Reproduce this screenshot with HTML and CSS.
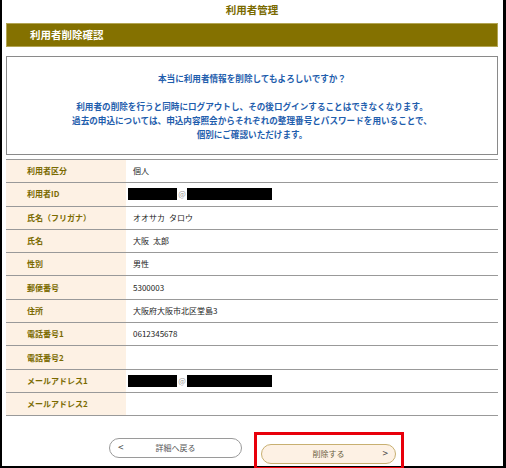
FILE: index.html
```html
<!DOCTYPE html>
<html lang="ja">
<head>
<meta charset="utf-8">
<link rel="stylesheet" href="styles.css">
</head>
<body>
<div class="frame">
  <h1 class="page-title">利用者管理</h1>
  <div class="section-bar">利用者削除確認</div>
  <div class="notice">
    <p>本当に利用者情報を削除してもよろしいですか？</p>
    <p>利用者の削除を行うと同時にログアウトし、その後ログインすることはできなくなります。<br>過去の申込については、申込内容照会からそれぞれの整理番号とパスワードを用いることで、<br>個別にご確認いただけます。</p>
  </div>
  <div class="info">
    <div class="row"><div class="label">利用者区分</div><div class="value">個人</div></div>
    <div class="row"><div class="label">利用者ID</div><div class="value"><span class="redact r1"></span><span class="at">@</span><span class="redact r2"></span></div></div>
    <div class="row"><div class="label">氏名（フリガナ）</div><div class="value">オオサカ&#8194;タロウ</div></div>
    <div class="row"><div class="label">氏名</div><div class="value">大阪&#8194;太郎</div></div>
    <div class="row"><div class="label">性別</div><div class="value">男性</div></div>
    <div class="row"><div class="label">郵便番号</div><div class="value">5300003</div></div>
    <div class="row"><div class="label">住所</div><div class="value">大阪府大阪市北区堂島3</div></div>
    <div class="row"><div class="label">電話番号1</div><div class="value">0612345678</div></div>
    <div class="row"><div class="label">電話番号2</div><div class="value"></div></div>
    <div class="row"><div class="label">メールアドレス1</div><div class="value"><span class="redact r1"></span><span class="at">@</span><span class="redact r2"></span></div></div>
    <div class="row"><div class="label">メールアドレス2</div><div class="value"></div></div>
  </div>
  <div class="actions">
    <button class="btn btn-back"><span class="arrow left">&lt;</span>詳細へ戻る</button>
    <div class="highlight">
      <button class="btn btn-delete">削除する<span class="arrow right">&gt;</span></button>
    </div>
  </div>
</div>
</body>
</html>
```
FILE: styles.css
```css
* { box-sizing: border-box; }
html, body { margin: 0; padding: 0; background: #fff; }
body {
  font-family: "Noto Sans CJK JP", "Noto Sans", sans-serif;
  width: 506px;
  height: 468px;
  overflow: hidden;
}
.frame {
  width: 506px;
  height: 468px;
  border-left: 2px solid #000;
  border-right: 3px solid #000;
  border-bottom: 2px solid #000;
  padding: 0 5px 0 4px;
}
.page-title {
  margin: 0;
  height: 23px;
  padding-top: 2px;
  font-size: 10.5px;
  line-height: 16px;
  font-weight: bold;
  text-align: center;
  color: #7a6a00;
}
.section-bar {
  height: 24px;
  background: #847100;
  border: 1px solid #b3a553;
  color: #fff;
  font-size: 10.5px;
  font-weight: bold;
  line-height: 22px;
  padding-left: 23px;
}
.notice {
  margin-top: 9px;
  height: 99px;
  border: 1px solid #8a8a8a;
  padding-top: 14px;
  text-align: center;
  color: #1f5ead;
  font-size: 8.6px;
  font-weight: bold;
  line-height: 14px;
}
.notice p { margin: 0; }
.notice p + p { margin-top: 14px; }
.info {
  margin-top: 4px;
  border-top: 1px solid #999;
}
.row {
  display: flex;
  height: 23.3px;
  border-bottom: 1px solid #999;
  font-size: 8px;
  line-height: 12px;
}
.label {
  width: 120px;
  flex: none;
  background: #fdf1e4;
  color: #7a6a00;
  font-weight: bold;
  padding-left: 21px;
  display: flex;
  align-items: center;
}
.value {
  padding-left: 7px;
  color: #222;
  display: flex;
  align-items: center;
  white-space: pre;
}
.redact {
  display: inline-block;
  height: 12px;
  background: #000;
}
.r1 { width: 49px; margin-left: -5px; }
.r2 { width: 85px; }
.at { color: #999; width: 10px; text-align: center; font-size: 8px; }
.actions {
  margin-top: 22px;
  display: flex;
  justify-content: center;
  gap: 19px;
  padding-left: 1px;
}
.btn {
  position: relative;
  height: 20px;
  border-radius: 10px;
  font-family: inherit;
  font-size: 8px;
  line-height: 18px;
  padding: 0;
  text-align: center;
  cursor: pointer;
}
.btn-back {
  width: 133px;
  background: #fff;
  border: 1px solid #9a9a9a;
  color: #555;
}
.btn-delete {
  width: 135px;
  background: #fdf1e4;
  border: 1px solid #c8b071;
  color: #6b6040;
}
.arrow {
  position: absolute;
  top: -1px;
  font-size: 10px;
  color: #444;
}
.arrow.left { left: 8px; }
.arrow.right { right: 7px; }
.highlight {
  position: relative;
}
.highlight::after {
  content: "";
  position: absolute;
  left: -7px;
  top: -6px;
  right: -8px;
  bottom: -6px;
  border: 3px solid #e8000b;
  pointer-events: none;
}
```
